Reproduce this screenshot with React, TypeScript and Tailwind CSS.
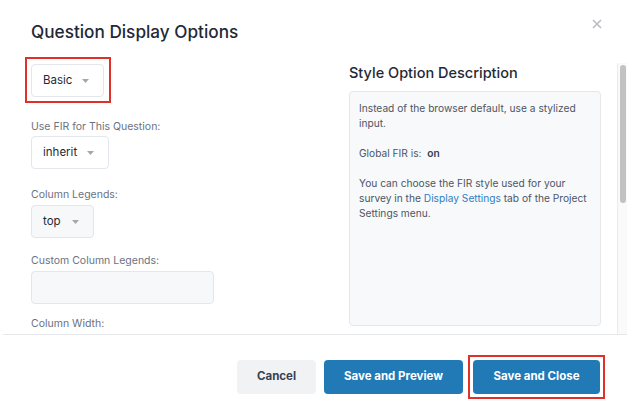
import React from "react";

const font = { fontFamily: "Inter, 'Liberation Sans', sans-serif" };

function Caret() {
  return (
    <svg width="7" height="4" viewBox="0 0 7 4" className="ml-auto">
      <path d="M0 0 L7 0 L3.5 4 Z" fill="#a3a8b0" />
    </svg>
  );
}

function Select({ label, w, bg }: { label: string; w: string; bg: string }) {
  return (
    <div
      className={`flex h-[33px] items-center rounded-[4px] border border-[#e3e6ea] pl-[11px] pr-[14px] text-[11.5px] text-[#1f2937] ${w} ${bg}`}
    >
      <span>{label}</span>
      <Caret />
    </div>
  );
}

function Label({ children }: { children: React.ReactNode }) {
  return <div className="text-[10.5px] leading-[14px] text-[#6b7280]">{children}</div>;
}

export default function App() {
  return (
    <div className="relative h-[410px] w-[638px] overflow-hidden bg-white" style={font}>
      {/* header */}
      <div className="flex h-[57px] items-start pl-[31px] pr-[36px] pt-[20px]">
        <h1 className="text-[17.2px] font-medium leading-[24px] text-[#1f2937]">Question Display Options</h1>
        <button className="ml-auto mt-[-1px] text-[#b3b8bf]">
          <svg width="10" height="10" viewBox="0 0 10 10">
            <path d="M1 1 L9 9 M9 1 L1 9" stroke="#b8bcc2" strokeWidth="1.6" />
          </svg>
        </button>
      </div>

      {/* body */}
      <div className="ml-[3px] flex h-[278px] w-[624px] border-b border-[#e5e7eb]">
        <div className="flex w-[614px] pl-[22px]">
          {/* left column */}
          <div className="flex w-[324px] flex-col">
            <div className="w-fit border-2 border-[#e0302a] pb-[4px] pl-[4px] pr-[5px] pt-[5px]">
              <Select label="Basic" w="w-[73px]" bg="bg-white" />
            </div>
            <div className="mt-[17px] pl-[6px]">
              <Label>Use FIR for This Question:</Label>
              <div className="mt-[2px]">
                <Select label="inherit" w="w-[78px]" bg="bg-white" />
              </div>
              <div className="mt-[19px]">
                <Label>Column Legends:</Label>
              </div>
              <div className="mt-[3px]">
                <Select label="top" w="w-[63px]" bg="bg-[#f7f8fa]" />
              </div>
              <div className="mt-[16px]">
                <Label>Custom Column Legends:</Label>
              </div>
              <div className="mt-[3px] h-[33px] w-[183px] rounded-[4px] border border-[#e3e6ea] bg-[#f7f8fa]" />
              <div className="mt-[13px]">
                <Label>Column Width:</Label>
              </div>
            </div>
          </div>
          {/* right column */}
          <div className="flex w-[252px] flex-col">
            <h2 className="mt-[6px] text-[14.5px] font-medium leading-[20px] text-[#1f2937]">Style Option Description</h2>
            <div className="mt-[8px] h-[235px] rounded-[4px] border border-[#e5e7eb] bg-[#f8f9fb] px-[9px] pt-[9px] text-[10.2px] leading-[15px] text-[#4b5563]">
              <p>Instead of the browser default, use a stylized input.</p>
              <p className="mt-[15px]">
                Global FIR is:&nbsp; <span className="font-semibold text-[#374151]">on</span>
              </p>
              <p className="mt-[15px]">
                You can choose the FIR style used for your survey in the{" "}
                <span className="text-[#2f7fc0]">Display Settings</span> tab of the Project Settings menu.
              </p>
            </div>
          </div>
        </div>
        {/* scrollbar */}
        <div className="mt-[6px] w-[10px] border-l border-[#ebebeb] bg-[#fafafa] pl-[2px] pt-[2px]">
          <div className="h-[138px] w-[6px] rounded-full bg-[#c2c2c2]" />
        </div>
      </div>

      {/* footer */}
      <div className="flex items-center justify-end pr-[33px] pt-[20px]">
        <button className="h-[34px] w-[79px] rounded-[4px] bg-[#f1f2f4] text-[11.5px] font-bold text-[#374151]">
          Cancel
        </button>
        <button className="ml-[8px] h-[34px] w-[139px] rounded-[4px] bg-[#2179b5] text-[11.5px] font-bold text-white">
          Save and Preview
        </button>
        <div className="ml-[5px] border-2 border-[#e0302a] p-[3px]">
          <button className="block h-[34px] w-[127px] rounded-[4px] bg-[#2179b5] text-[11.5px] font-bold text-white">
            Save and Close
          </button>
        </div>
      </div>
    </div>
  );
}
